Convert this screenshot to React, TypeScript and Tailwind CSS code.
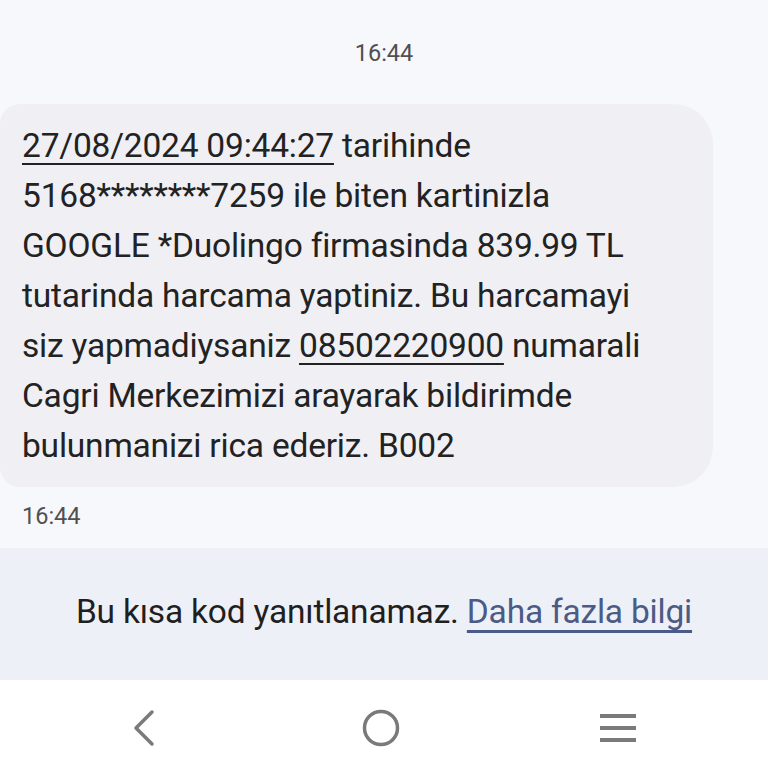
export default function App() {
  const font = { fontFamily: 'Roboto, "Noto Sans", sans-serif' }
  return (
    <div className="flex h-[768px] w-[768px] flex-col overflow-hidden bg-[#f7f8fc]" style={font}>
      <div className="flex h-[104px] items-start justify-center pt-[36px] text-[23.5px] text-[#505050]">16:44</div>

      <div className="mr-[55px] rounded-r-[40px] rounded-l-[20px] bg-[#efeff4] pb-[16px] pl-[22px] pr-[10px] pt-[17px] text-[33.5px] leading-[50px] tracking-[-0.2px] text-[#222]">
        <span className="underline decoration-2 underline-offset-[6px] [text-decoration-skip-ink:none]">27/08/2024 09:44:27</span> tarihinde
        <br />
        5168********7259 ile biten kartinizla
        <br />
        GOOGLE *Duolingo firmasinda 839.99 TL
        <br />
        tutarinda harcama yaptiniz. Bu harcamayi
        <br />
        siz yapmadiysaniz{' '}
        <span className="underline decoration-2 underline-offset-[6px] [text-decoration-skip-ink:none]">08502220900</span> numarali
        <br />
        Cagri Merkezimizi arayarak bildirimde
        <br />
        bulunmanizi rica ederiz. B002
      </div>

      <div className="h-[61px] pl-[22px] pt-[12px] text-[23.5px] text-[#505050]">16:44</div>

      <div className="flex h-[132px] items-center justify-center bg-[#eef0f7] pb-[4px] text-[33.5px] tracking-[-0.2px] text-[#1f1f1f]">
        <span className="whitespace-nowrap">
          Bu kısa kod yanıtlanamaz.{' '}
          <span className="text-[#4b5b85] underline decoration-[3px] underline-offset-[7px] [text-decoration-skip-ink:none]">
            Daha fazla bilgi
          </span>
        </span>
      </div>

      <div className="flex flex-1 items-center bg-white">
        <div className="flex w-full items-center justify-between pl-[130px] pr-[130px] pt-[8px]">
          <svg width="28" height="38" viewBox="0 0 28 38" fill="none">
            <path d="M22 3 L6 19 L22 35" stroke="#7a7a7a" strokeWidth="3.5" strokeLinecap="round" strokeLinejoin="round" />
          </svg>
          <svg width="40" height="40" viewBox="0 0 40 40" fill="none" className="ml-[6px]">
            <circle cx="20" cy="20" r="16.5" stroke="#7a7a7a" strokeWidth="3.5" />
          </svg>
          <svg width="40" height="32" viewBox="0 0 40 32" fill="none">
            <path d="M2 4 H38 M2 16 H38 M2 28 H38" stroke="#7a7a7a" strokeWidth="4" />
          </svg>
        </div>
      </div>
    </div>
  )
}
